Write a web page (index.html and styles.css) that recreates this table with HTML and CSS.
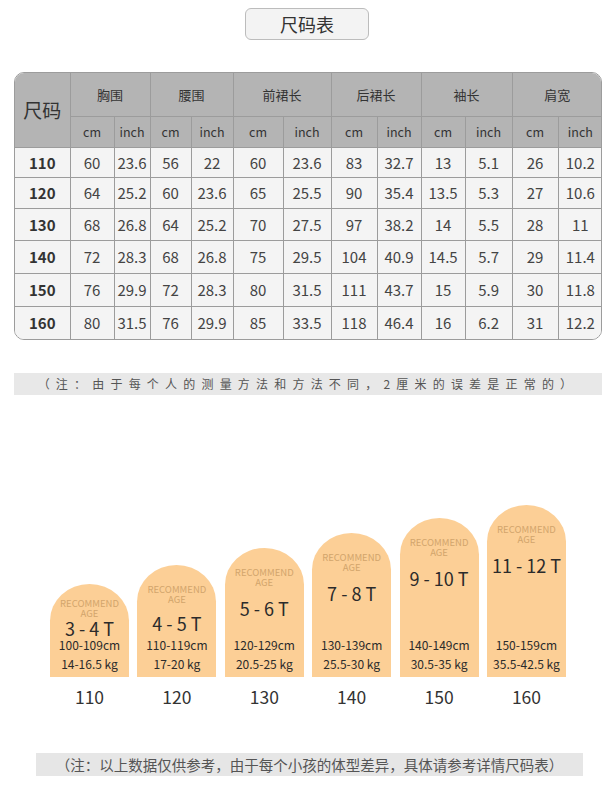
FILE: index.html
```html
<!DOCTYPE html>
<html lang="zh">
<head>
<meta charset="utf-8">
<title>尺码表</title>
<link rel="stylesheet" href="styles.css">
</head>
<body>
<div class="page">
  <div class="title">尺码表</div>

  <div class="table-wrap">
    <table class="size-table">
      <colgroup>
        <col class="w55"><col class="w44"><col class="w36"><col class="w41"><col class="w42"><col class="w50"><col class="w48"><col class="w46"><col class="w44"><col class="w44"><col class="w47"><col class="w46"><col class="w44">
      </colgroup>
      <thead>
        <tr class="head-1">
          <th rowspan="2" class="size-head">尺码</th>
          <th colspan="2">胸围</th>
          <th colspan="2">腰围</th>
          <th colspan="2">前裙长</th>
          <th colspan="2">后裙长</th>
          <th colspan="2">袖长</th>
          <th colspan="2">肩宽</th>
        </tr>
        <tr class="head-2">
          <th>cm</th><th>inch</th><th>cm</th><th>inch</th><th>cm</th><th>inch</th><th>cm</th><th>inch</th><th>cm</th><th>inch</th><th>cm</th><th>inch</th>
        </tr>
      </thead>
      <tbody>
        <tr class="r1"><td class="size">110</td><td>60</td><td>23.6</td><td>56</td><td>22</td><td>60</td><td>23.6</td><td>83</td><td>32.7</td><td>13</td><td>5.1</td><td>26</td><td>10.2</td></tr>
        <tr class="r2"><td class="size">120</td><td>64</td><td>25.2</td><td>60</td><td>23.6</td><td>65</td><td>25.5</td><td>90</td><td>35.4</td><td>13.5</td><td>5.3</td><td>27</td><td>10.6</td></tr>
        <tr class="r3"><td class="size">130</td><td>68</td><td>26.8</td><td>64</td><td>25.2</td><td>70</td><td>27.5</td><td>97</td><td>38.2</td><td>14</td><td>5.5</td><td>28</td><td>11</td></tr>
        <tr class="r4"><td class="size">140</td><td>72</td><td>28.3</td><td>68</td><td>26.8</td><td>75</td><td>29.5</td><td>104</td><td>40.9</td><td>14.5</td><td>5.7</td><td>29</td><td>11.4</td></tr>
        <tr class="r5"><td class="size">150</td><td>76</td><td>29.9</td><td>72</td><td>28.3</td><td>80</td><td>31.5</td><td>111</td><td>43.7</td><td>15</td><td>5.9</td><td>30</td><td>11.8</td></tr>
        <tr class="r6"><td class="size">160</td><td>80</td><td>31.5</td><td>76</td><td>29.9</td><td>85</td><td>33.5</td><td>118</td><td>46.4</td><td>16</td><td>6.2</td><td>31</td><td>12.2</td></tr>
      </tbody>
    </table>
  </div>

  <div class="note">（注：由于每个人的测量方法和方法不同，2厘米的误差是正常的）</div>

  <div class="ages">
    <div class="age-col">
      <div class="arch arch-1">
        <div class="arch-top">
          <div class="rec">RECOMMEND<br>AGE</div>
          <div class="age">3 - 4 T</div>
        </div>
        <div class="arch-bottom">
          <div class="meas">100-109cm</div>
          <div class="meas">14-16.5 kg</div>
        </div>
      </div>
      <div class="label">110</div>
    </div>
    <div class="age-col">
      <div class="arch arch-2">
        <div class="arch-top">
          <div class="rec">RECOMMEND<br>AGE</div>
          <div class="age">4 - 5 T</div>
        </div>
        <div class="arch-bottom">
          <div class="meas">110-119cm</div>
          <div class="meas">17-20 kg</div>
        </div>
      </div>
      <div class="label">120</div>
    </div>
    <div class="age-col">
      <div class="arch arch-3">
        <div class="arch-top">
          <div class="rec">RECOMMEND<br>AGE</div>
          <div class="age">5 - 6 T</div>
        </div>
        <div class="arch-bottom">
          <div class="meas">120-129cm</div>
          <div class="meas">20.5-25 kg</div>
        </div>
      </div>
      <div class="label">130</div>
    </div>
    <div class="age-col">
      <div class="arch arch-4">
        <div class="arch-top">
          <div class="rec">RECOMMEND<br>AGE</div>
          <div class="age">7 - 8 T</div>
        </div>
        <div class="arch-bottom">
          <div class="meas">130-139cm</div>
          <div class="meas">25.5-30 kg</div>
        </div>
      </div>
      <div class="label">140</div>
    </div>
    <div class="age-col">
      <div class="arch arch-5">
        <div class="arch-top">
          <div class="rec">RECOMMEND<br>AGE</div>
          <div class="age">9 - 10 T</div>
        </div>
        <div class="arch-bottom">
          <div class="meas">140-149cm</div>
          <div class="meas">30.5-35 kg</div>
        </div>
      </div>
      <div class="label">150</div>
    </div>
    <div class="age-col">
      <div class="arch arch-6">
        <div class="arch-top">
          <div class="rec">RECOMMEND<br>AGE</div>
          <div class="age">11 - 12 T</div>
        </div>
        <div class="arch-bottom">
          <div class="meas">150-159cm</div>
          <div class="meas">35.5-42.5 kg</div>
        </div>
      </div>
      <div class="label">160</div>
    </div>
  </div>

  <div class="note-2">（注：以上数据仅供参考，由于每个小孩的体型差异，具体请参考详情尺码表）</div>
</div>
</body>
</html>
```

FILE: styles.css
```css
* { box-sizing: border-box; }

html, body {
  margin: 0;
  padding: 0;
  background: #ffffff;
}

body {
  font-family: "Noto Sans CJK SC", "Noto Sans", sans-serif;
  color: #333333;
}

.page {
  width: 614px;
  padding-top: 8px;
}

.title {
  width: 124px;
  height: 32px;
  margin: 0 auto;
  border: 1px solid #bcbcbc;
  border-radius: 6px;
  background: #f3f3f3;
  font-size: 18px;
  line-height: 30px;
  text-align: center;
  color: #333333;
}

.table-wrap {
  width: 588px;
  margin: 32px 0 0 14px;
  border: 1px solid #9c9c9c;
  border-radius: 10px;
  overflow: hidden;
}

.size-table {
  width: 100%;
  table-layout: fixed;
  border-collapse: collapse;
}

.w55 { width: 55px; }
.w50 { width: 50px; }
.w48 { width: 48px; }
.w47 { width: 47px; }
.w46 { width: 46px; }
.w44 { width: 44px; }
.w42 { width: 42px; }
.w41 { width: 41px; }
.w36 { width: 36px; }

.size-table th,
.size-table td {
  padding: 0;
  border: 1px solid #9c9c9c;
  text-align: center;
  white-space: nowrap;
}

.size-table tr > :first-child { border-left: none; }
.size-table tr > :last-child { border-right: none; }
.size-table thead tr:first-child th { border-top: none; }
.size-table tbody tr:last-child td { border-bottom: none; }

.size-table th {
  background: #b4b4b4;
  font-weight: 400;
  color: #333333;
}

.head-1 th {
  height: 43px;
  font-size: 13px;
}

.head-1 .size-head {
  font-size: 19px;
  border-right: 1px solid #9c9c9c;
}

.head-2 th {
  height: 31px;
  font-size: 12.5px;
}

.size-table td {
  background: #f4f4f4;
  font-size: 15px;
  color: #444444;
}

.r1 td { height: 30px; }
.r2 td { height: 31px; }
.r3 td { height: 32px; }
.r4 td { height: 33px; }
.r5 td { height: 33px; }
.r6 td { height: 33px; }

.size-table td.size {
  font-weight: 700;
  color: #333333;
}

.note {
  width: 588px;
  height: 22px;
  margin: 33px 0 0 14px;
  background: #e8e8e8;
  font-size: 12px;
  line-height: 22px;
  letter-spacing: 6.2px;
  text-align: center;
  color: #555555;
  white-space: nowrap;
}

.ages {
  display: flex;
  align-items: flex-end;
  gap: 8.4px;
  margin: 110px 0 0 50px;
}

.age-col {
  width: 79px;
  display: flex;
  flex-direction: column;
}

.arch {
  display: flex;
  flex-direction: column;
  justify-content: space-between;
  background: #fccf96;
  border-radius: 40px 40px 0 0 / 37px 37px 0 0;
  text-align: center;
  padding: 19px 0 6px;
}

.arch-1 { height: 93px; padding-top: 14px; }
.arch-2 { height: 112px; }
.arch-3 { height: 129px; }
.arch-4 { height: 144px; }
.arch-5 { height: 159px; }
.arch-6 { height: 172px; }

.rec {
  font-size: 9.5px;
  line-height: 10px;
  color: #d2a56c;
}

.age {
  margin-top: 7px;
  font-size: 18px;
  line-height: 24px;
  color: #2b2b2b;
}

.arch-3 .age,
.arch-4 .age,
.arch-5 .age,
.arch-6 .age { margin-top: 9px; }

.arch-1 .age {
  margin-top: 1px;
  line-height: 19px;
}

.arch-bottom {
  display: flex;
  flex-direction: column;
  gap: 5px;
}

.meas {
  font-size: 12px;
  line-height: 14px;
  color: #2b2b2b;
}

.label {
  margin-top: 8px;
  font-size: 17.5px;
  line-height: 24px;
  text-align: center;
  color: #333333;
}

.note-2 {
  width: 547px;
  height: 23px;
  margin: 44px 0 0 36px;
  background: #e6e6e6;
  font-size: 14.5px;
  line-height: 23px;
  text-align: center;
  color: #555555;
  white-space: nowrap;
}
```
